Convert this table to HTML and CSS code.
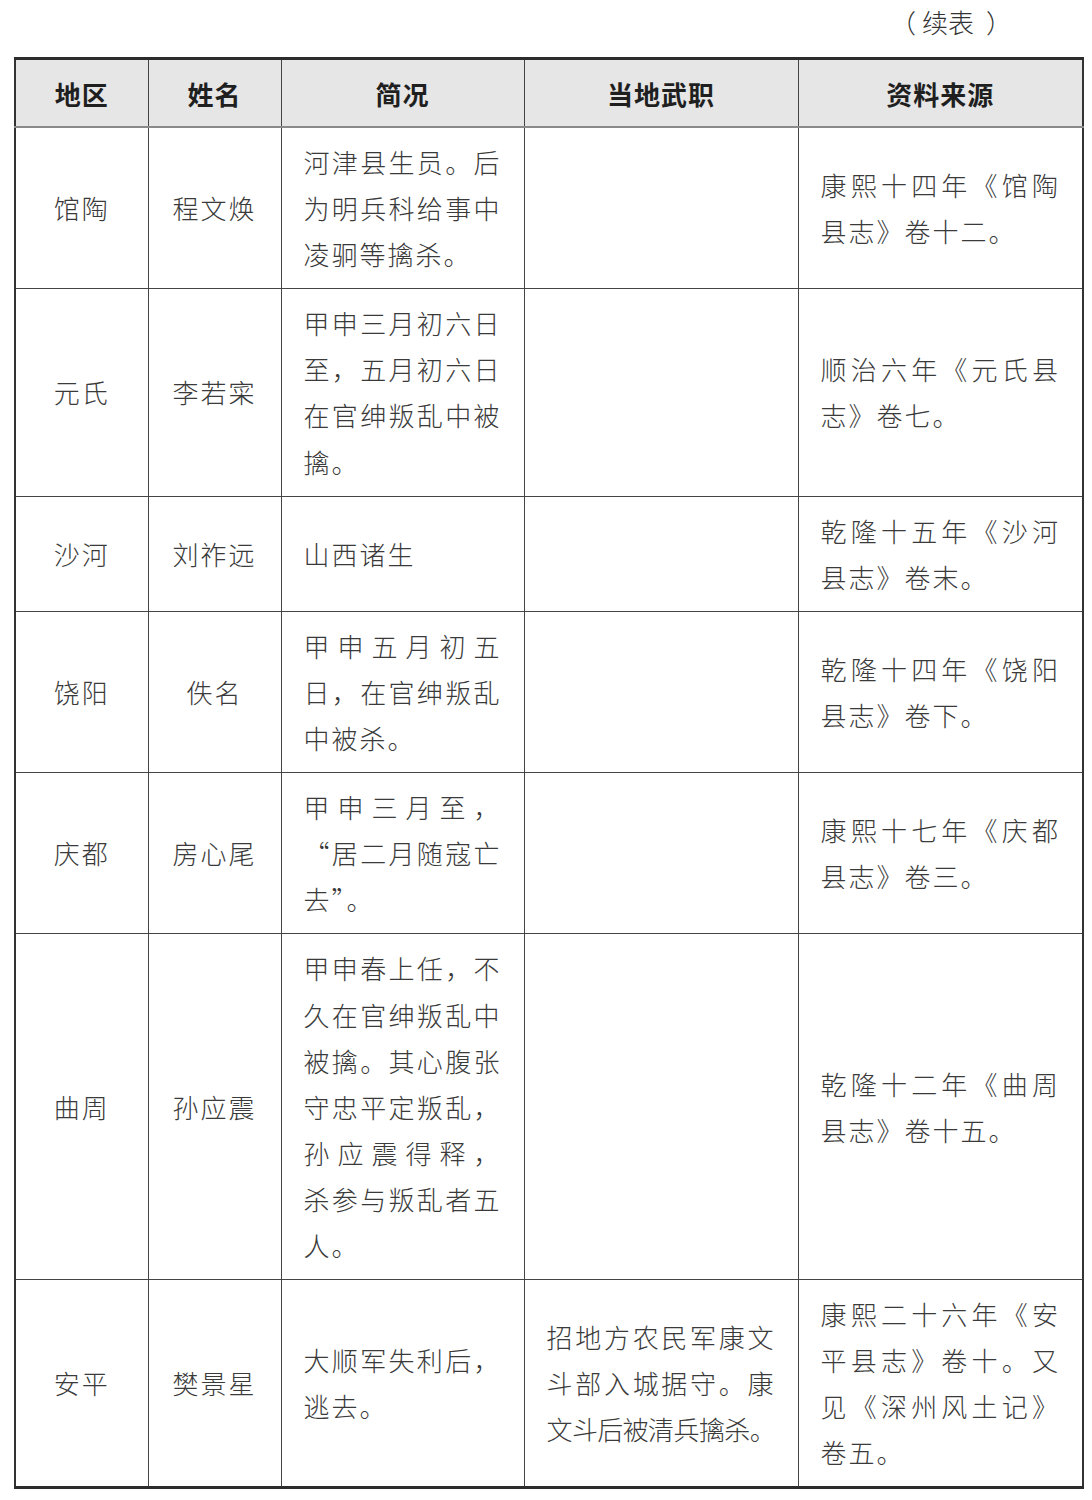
FILE: index.html
```html
<!DOCTYPE html>
<html lang="zh-CN">
<head>
<meta charset="utf-8">
<title>续表</title>
<link rel="stylesheet" href="styles.css">
</head>
<body>
<div class="page">
  <div class="caption"><span class="pl">（</span>续表<span class="pr">）</span></div>
  <table class="record">
    <colgroup>
      <col class="c-area">
      <col class="c-name">
      <col class="c-brief">
      <col class="c-post">
      <col class="c-source">
    </colgroup>
    <thead>
      <tr>
        <th>地区</th>
        <th>姓名</th>
        <th>简况</th>
        <th>当地武职</th>
        <th>资料来源</th>
      </tr>
    </thead>
    <tbody>
      <tr>
        <td class="center">馆陶</td>
        <td class="center">程文焕</td>
        <td class="text"><span class="ln">河津县生员。后</span><span class="ln">为明兵科给事中</span><span class="last">凌𬳶等擒杀。</span></td>
        <td class="text"></td>
        <td class="text"><span class="ln">康熙十四年《馆陶</span><span class="last">县志》卷十二。</span></td>
      </tr>
      <tr>
        <td class="center">元氏</td>
        <td class="center">李若寀</td>
        <td class="text"><span class="ln">甲申三月初六日</span><span class="ln">至，五月初六日</span><span class="ln">在官绅叛乱中被</span><span class="last">擒。</span></td>
        <td class="text"></td>
        <td class="text"><span class="ln">顺治六年《元氏县</span><span class="last">志》卷七。</span></td>
      </tr>
      <tr>
        <td class="center">沙河</td>
        <td class="center">刘祚远</td>
        <td class="text"><span class="last">山西诸生</span></td>
        <td class="text"></td>
        <td class="text"><span class="ln">乾隆十五年《沙河</span><span class="last">县志》卷末。</span></td>
      </tr>
      <tr>
        <td class="center">饶阳</td>
        <td class="center">佚名</td>
        <td class="text"><span class="ln">甲申五月初五</span><span class="ln">日，在官绅叛乱</span><span class="last">中被杀。</span></td>
        <td class="text"></td>
        <td class="text"><span class="ln">乾隆十四年《饶阳</span><span class="last">县志》卷下。</span></td>
      </tr>
      <tr>
        <td class="center">庆都</td>
        <td class="center">房心尾</td>
        <td class="text"><span class="ln">甲申三月至，</span><span class="ln">“居二月随寇亡</span><span class="last">去”。</span></td>
        <td class="text"></td>
        <td class="text"><span class="ln">康熙十七年《庆都</span><span class="last">县志》卷三。</span></td>
      </tr>
      <tr>
        <td class="center">曲周</td>
        <td class="center">孙应震</td>
        <td class="text"><span class="ln">甲申春上任，不</span><span class="ln">久在官绅叛乱中</span><span class="ln">被擒。其心腹张</span><span class="ln">守忠平定叛乱，</span><span class="ln">孙应震得释，</span><span class="ln">杀参与叛乱者五</span><span class="last">人。</span></td>
        <td class="text"></td>
        <td class="text"><span class="ln">乾隆十二年《曲周</span><span class="last">县志》卷十五。</span></td>
      </tr>
      <tr>
        <td class="center">安平</td>
        <td class="center">樊景星</td>
        <td class="text"><span class="ln">大顺军失利后，</span><span class="last">逃去。</span></td>
        <td class="text"><span class="ln">招地方农民军康文</span><span class="ln">斗部入城据守。康</span><span class="last tight">文斗后被清兵擒杀。</span></td>
        <td class="text"><span class="ln">康熙二十六年《安</span><span class="ln">平县志》卷十。又</span><span class="ln">见《深州风土记》</span><span class="last">卷五。</span></td>
      </tr>
    </tbody>
  </table>
</div>
</body>
</html>
```

FILE: styles.css
```css
html, body {
  margin: 0;
  padding: 0;
  background: #ffffff;
}

body {
  font-family: "Noto Sans CJK SC", "Noto Sans", sans-serif;
  color: #3a3a3a;
}

.page {
  width: 1092px;
  padding: 6px 0 0 0;
}

.caption {
  text-align: right;
  padding-right: 80px;
  font-size: 26px;
  line-height: 32px;
  height: 51px;
  color: #333;
  font-weight: 300;
}

.pl {
  margin-right: 6px;
}

.pr {
  margin-left: 12px;
}

.record {
  margin-left: 14px;
  width: 1069px;
  table-layout: fixed;
  border-collapse: collapse;
  border-top: 3px solid #2c2c2c;
  border-bottom: 3px solid #2c2c2c;
  border-left: 2px solid #333;
  border-right: 2px solid #333;
}

.c-area { width: 133px; }
.c-name { width: 133px; }
.c-brief { width: 243px; }
.c-post { width: 274px; }
.c-source { width: 285px; }

.record th {
  background: #e6e6e6;
  height: 66px;
  padding: 0;
  font-size: 26px;
  font-weight: 700;
  letter-spacing: 1px;
  color: #1f1f1f;
  text-align: center;
  vertical-align: middle;
  border-left: 1px solid #444;
  border-right: 1px solid #444;
  border-bottom: 2px solid #8a8a8a;
}

.record td {
  border: 1px solid #444;
  padding: 11px 22px;
  font-size: 26px;
  line-height: 46.1px;
  letter-spacing: 2px;
  font-weight: 300;
  vertical-align: middle;
}

.record td.center {
  text-align: center;
  padding: 11px 0;
}

.record td.text {
  text-align: justify;
}

.ln {
  display: block;
  white-space: nowrap;
  text-align: justify;
  text-align-last: justify;
}

.last {
  display: block;
  white-space: nowrap;
  text-align: left;
}

.tight {
  letter-spacing: -0.6px;
}
```
